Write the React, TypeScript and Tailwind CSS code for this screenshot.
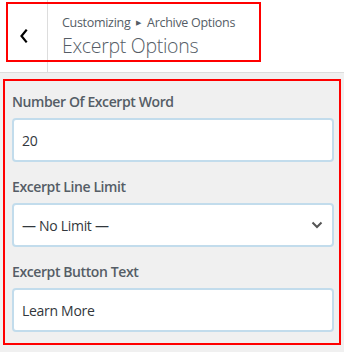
import React from 'react';

const font = { fontFamily: '"Open Sans", "Noto Sans", sans-serif' };

const Field: React.FC<{ label: string; children: React.ReactNode; first?: boolean }> = ({ label, children, first }) => (
  <div className={first ? '' : 'mt-[15px]'}>
    <div className="h-[20px] leading-[20px] text-[14px] font-semibold tracking-[-0.4px] text-[#555d66] mb-[6px]">{label}</div>
    {children}
  </div>
);

const App: React.FC = () => {
  return (
    <div className="relative w-[344px] h-[352px] bg-[#f0f0f0] overflow-hidden" style={font}>
      <div className="h-[73px] bg-white border-b border-[#dddddd] flex">
        <div className="w-[48px] border-r border-[#dddddd] flex items-center justify-center">
          <svg width="10" height="16" viewBox="0 0 10 16" fill="none">
            <path d="M7 2.5 L2.5 8 L7 13.5" stroke="#000" strokeWidth="2.2" strokeLinecap="square" />
          </svg>
        </div>
        <div className="pl-[14px] pt-[13px]">
          <div className="text-[12.5px] leading-[20px] tracking-[-0.3px] text-[#555d66] flex items-center">
            Customizing
            <span className="mx-[6px] text-[7px] text-[#555d66]">▶</span>
            Archive Options
          </div>
          <div className="text-[19.5px] leading-[26px] font-light tracking-[-0.3px] text-[#555d66]">Excerpt Options</div>
        </div>
      </div>
      <div className="absolute left-[6px] top-[2px] w-[255px] h-[60px] border-2 border-[#ff0000]" />

      <div className="mt-[6px] mx-[3px] h-[266px] border-2 border-[#ff0000] pl-[7px] pr-[5px] pt-[11px]">
        <Field label="Number Of Excerpt Word" first>
          <div className="h-[44px] bg-white border-2 border-[#c2dcec] rounded-[4px] flex items-center pl-[8px] text-[14px] tracking-[-0.3px] text-[#32373c]">20</div>
        </Field>
        <Field label="Excerpt Line Limit">
          <div className="h-[44px] bg-white border-2 border-[#c2dcec] rounded-[4px] flex items-center justify-between pl-[8px] pr-[9px] text-[14px] tracking-[-0.3px] text-[#32373c]">
            <span>— No Limit —</span>
            <svg width="12" height="8" viewBox="0 0 12 8" fill="none">
              <path d="M1.5 1.5 L6 6 L10.5 1.5" stroke="#555" strokeWidth="2" />
            </svg>
          </div>
        </Field>
        <Field label="Excerpt Button Text">
          <div className="h-[44px] bg-white border-2 border-[#c2dcec] rounded-[4px] flex items-center pl-[8px] text-[14px] tracking-[-0.3px] text-[#32373c]">Learn More</div>
        </Field>
      </div>
    </div>
  );
};

export default App;
